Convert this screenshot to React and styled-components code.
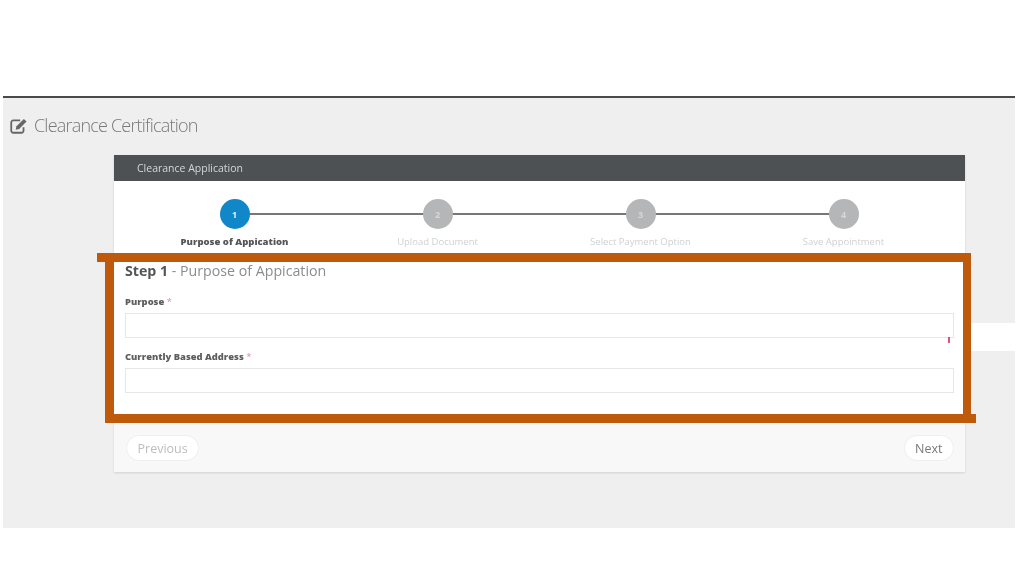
import React from "react";
import styled, { createGlobalStyle } from "styled-components";

const GlobalStyle = createGlobalStyle`
  html, body {
    margin: 0;
    padding: 0;
    background: #fff;
    font-family: "Open Sans", "Liberation Sans", sans-serif;
  }
`;

const Page = styled.div`
  position: relative;
  width: 1024px;
  height: 576px;
  padding: 96px 9px 0 3px;
  box-sizing: border-box;
  overflow: hidden;
`;
const Screen = styled.div`
  height: 432px;
  box-sizing: border-box;
  background: #efefef;
  border-top: 2px solid #4a4a4a;
  filter: blur(0.7px);
`;
const TitleRow = styled.div`
  display: flex;
  align-items: center;
  gap: 6px;
  height: 54px;
  padding-left: 6px;
  svg {
    width: 19px;
    height: 19px;
  }
`;
const Title = styled.h1`
  margin: 0;
  font-size: 18px;
  font-weight: 300;
  letter-spacing: -0.8px;
  color: #77797a;
`;
const Card = styled.div`
  margin: 3px 50px 0 111px;
  background: #fff;
  box-shadow: 0 1px 2px rgba(0, 0, 0, 0.12);
`;
const CardHeader = styled.div`
  height: 26px;
  padding-left: 23px;
  display: flex;
  align-items: center;
  background: #4d5153;
  color: #d4d6d6;
  font-size: 10.5px;
`;
const Stepper = styled.div`
  display: grid;
  grid-template-columns: repeat(4, 203px);
  padding: 18px 20px 0 19px;
  height: 54px;
`;
const Step = styled.div`
  position: relative;
  display: flex;
  flex-direction: column;
  align-items: center;
  &:not(:last-child)::after {
    content: "";
    position: absolute;
    top: 14px;
    left: 50%;
    width: 100%;
    height: 2px;
    background: #777;
  }
`;
const Circle = styled.div`
  position: relative;
  z-index: 1;
  width: 30px;
  height: 30px;
  border-radius: 50%;
  display: flex;
  align-items: center;
  justify-content: center;
  background: ${(p) => (p.$active ? "#0f87c9" : "#b4b6b8")};
  color: ${(p) => (p.$active ? "#e4f2fa" : "#d6d7d8")};
  font-size: 9px;
  font-weight: 700;
`;
const StepLabel = styled.div`
  margin-top: 7px;
  font-size: 9.5px;
  line-height: 12px;
  white-space: nowrap;
  font-weight: ${(p) => (p.$active ? 800 : 400)};
  color: ${(p) => (p.$active ? "#555" : "#cfd0d1")};
`;
const Form = styled.div`
  position: relative;
  height: 170px;
  box-sizing: border-box;
  padding: 8px 11px 0;
`;
const StepTitle = styled.h2`
  margin: 0 0 15px;
  font-size: 14.2px;
  line-height: 20px;
  font-weight: 400;
  color: #8a8c8d;
  b {
    font-weight: 700;
    color: #555;
  }
`;
const Field = styled.div`
  margin-bottom: 13px;
`;
const FieldLabel = styled.label`
  display: block;
  margin-bottom: 5px;
  font-size: 9.4px;
  line-height: 12px;
  font-weight: 800;
  color: #5c5e60;
  span {
    color: #e58aa8;
    font-weight: 400;
  }
`;
const Input = styled.input`
  display: block;
  width: 100%;
  height: 25px;
  box-sizing: border-box;
  background: #fff;
  border: 1px solid #e6e6e6;
  outline: none;
`;
const Tick = styled.span`
  position: absolute;
  top: 84px;
  right: 15px;
  width: 2px;
  height: 6px;
  background: #e0507f;
`;
const Footer = styled.div`
  height: 49px;
  box-sizing: border-box;
  padding: 12px 11px 0 12px;
  display: flex;
  justify-content: space-between;
  align-items: flex-start;
  background: #f8f8f8;
`;
const PagerButton = styled.button`
  height: 26px;
  padding: 0 10.5px;
  border: 1px solid #efefef;
  border-radius: 13px;
  background: #fff;
  font-family: inherit;
  font-size: 12.5px;
  color: ${(p) => (p.$muted ? "#bcbdbe" : "#77797a")};
`;
const Highlight = styled.div`
  position: absolute;
  left: 105px;
  top: 253px;
  width: 866px;
  height: 170px;
  box-sizing: border-box;
  border: 9px solid #bf5a0c;
  border-right-width: 8px;
  pointer-events: none;
  &::before {
    content: "";
    position: absolute;
    left: -17px;
    top: -9px;
    width: 9px;
    height: 9px;
    background: #bf5a0c;
  }
  &::after {
    content: "";
    position: absolute;
    right: -13px;
    bottom: -9px;
    width: 5px;
    height: 9px;
    background: #bf5a0c;
  }
`;
const WhiteStrip = styled.div`
  position: absolute;
  left: 971px;
  top: 323px;
  width: 44px;
  height: 28px;
  background: #fff;
`;

const EditIcon = () => (
  <svg viewBox="0 0 17 17" aria-hidden="true">
    <path
      d="M13 10v3.2a1.8 1.8 0 0 1-1.8 1.8H3.8A1.8 1.8 0 0 1 2 13.2V5.8A1.8 1.8 0 0 1 3.8 4H10"
      fill="none"
      stroke="#666"
      strokeWidth="1.6"
    />
    <path d="M6 12.2l.7-3L13.3 2.6l2.4 2.4-6.6 6.6z" fill="#666" />
  </svg>
);

const steps = ["Purpose of Appication", "Upload Document", "Select Payment Option", "Save Appointment"];

export default function App() {
  return (
    <>
      <GlobalStyle />
      <Page>
        <Screen>
          <TitleRow>
            <EditIcon />
            <Title>Clearance Certification</Title>
          </TitleRow>
          <Card>
            <CardHeader>Clearance Application</CardHeader>
            <Stepper>
              {steps.map((label, i) => (
                <Step key={label}>
                  <Circle $active={i === 0}>{i + 1}</Circle>
                  <StepLabel $active={i === 0}>{label}</StepLabel>
                </Step>
              ))}
            </Stepper>
            <Form>
              <StepTitle>
                <b>Step 1</b> - Purpose of Appication
              </StepTitle>
              <Field>
                <FieldLabel>
                  Purpose <span>*</span>
                </FieldLabel>
                <Input />
              </Field>
              <Field>
                <FieldLabel>
                  Currently Based Address <span>*</span>
                </FieldLabel>
                <Input />
              </Field>
              <Tick />
            </Form>
            <Footer>
              <PagerButton $muted>Previous</PagerButton>
              <PagerButton>Next</PagerButton>
            </Footer>
          </Card>
        </Screen>
        <WhiteStrip />
        <Highlight />
      </Page>
    </>
  );
}
